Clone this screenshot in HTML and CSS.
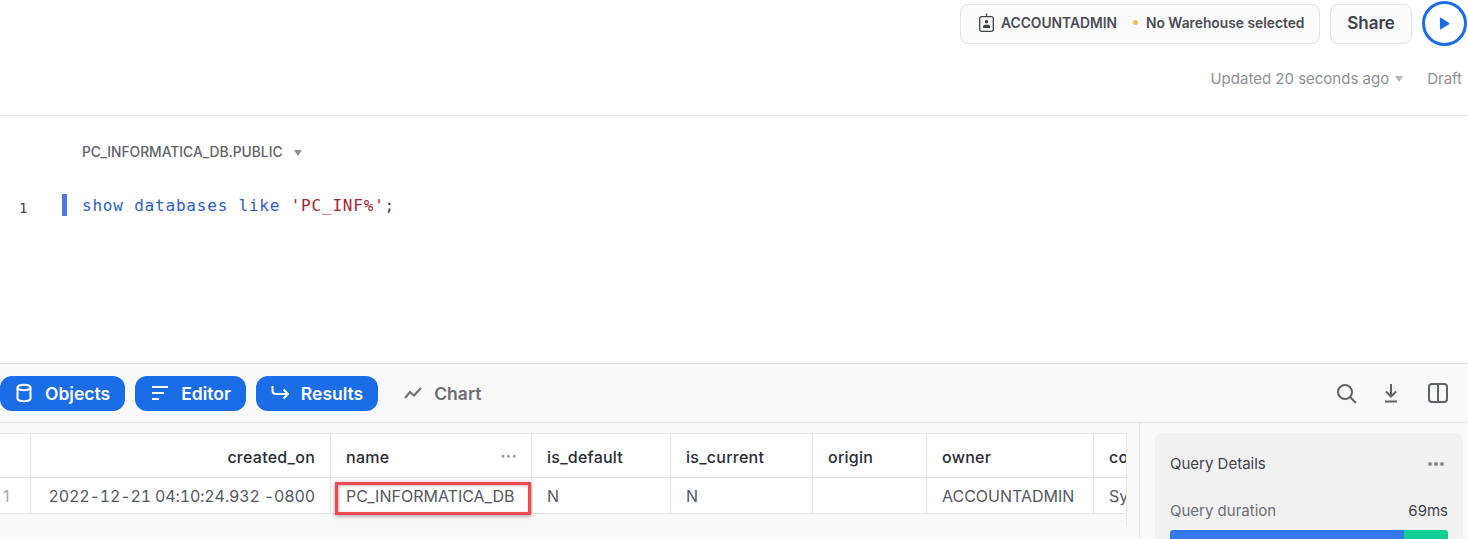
FILE: index.html
```html
<!DOCTYPE html>
<html lang="en">
<head>
<meta charset="utf-8">
<title>Worksheet</title>
<link rel="stylesheet" href="styles.css">
</head>
<body>
<div class="page">
  <header class="header">
    <div class="actions">
      <div class="context-pill">
        <svg class="role-icon" viewBox="0 0 15 19" width="15" height="19" fill="none" stroke="#3f4249" stroke-width="1.3"><rect x=".7" y="3.600" width="13.600" height="14.700" rx="2"/><path d="M7.500 .5v3.100"/><circle cx="7.500" cy="8.700" r="1.800" fill="#3f4249" stroke="none"/><path d="M4 15v-1.200c0-1.300 1-2 2-2h3c1 0 2 .7 2 2V15z" fill="#3f4249" stroke="none"/></svg>
        <span class="role">ACCOUNTADMIN</span>
        <span class="dot"></span>
        <span class="warehouse">No Warehouse selected</span>
      </div>
      <button class="share">Share</button>
      <button class="run"><svg viewBox="0 0 12 14" width="11" height="13"><path d="M1 1.200v11.600c0 .5.5.8 1 .5l9-5.600c.4-.3.4-.9 0-1.200L2 .7c-.5-.3-1 0-1 .5z" fill="#1a6ce7"/></svg></button>
    </div>
    <div class="status">
      <span>Updated 20 seconds ago</span><span class="caret"></span>
      <span class="draft">Draft</span>
    </div>
  </header>

  <section class="editor">
    <div class="db-context">PC_INFORMATICA_DB.PUBLIC<span class="caret"></span></div>
    <div class="code-line">
      <span class="line-no">1</span>
      <span class="line-mark"></span>
      <code class="code"><span class="kw">show databases like</span> <span class="str">'PC_INF%'</span><span class="punct">;</span></code>
    </div>
  </section>

  <section class="bottom">
    <div class="toolbar">
      <button class="tab">
        <svg viewBox="0 0 18 20" width="18" height="20" fill="none" stroke="#fff" stroke-width="2"><path d="M2.500 4.500c0-1.600 3-2.800 6.500-2.800s6.500 1.200 6.500 2.800v11c0 1.600-3 2.800-6.500 2.800s-6.500-1.200-6.500-2.800z"/><path d="M2.500 4.500c0 1.600 3 2.800 6.500 2.800s6.500-1.200 6.500-2.800"/></svg>
        Objects</button>
      <button class="tab tab-editor">
        <svg viewBox="0 0 18 18" width="18" height="18" fill="none" stroke="#fff" stroke-width="2"><path d="M1 3h16M1 9h12M1 15h7"/></svg>
        Editor</button>
      <button class="tab">
        <svg viewBox="0 0 18 16" width="18" height="16" fill="none" stroke="#fff" stroke-width="2"><path d="M1.500 1v4.500c0 2 1.500 3.500 3.500 3.500H17"/><path d="M12.500 4.500 17 9l-4.500 4.500"/></svg>
        Results</button>
      <div class="chart-tab">
        <svg viewBox="0 0 18 12" width="18" height="12" fill="none" stroke="#6b6e75" stroke-width="2"><path d="M1 11l5-6 4 3.500L17 1"/></svg>
        Chart</div>
      <div class="tools">
        <svg viewBox="0 0 21 21" width="21" height="21" fill="none" stroke="#5f6269" stroke-width="2"><circle cx="9" cy="9" r="7"/><path d="m14 14 6 6"/></svg>
        <svg class="download" viewBox="0 0 16 20" width="16" height="20" fill="none" stroke="#5f6269" stroke-width="2"><path d="M8 1v12M3 8.500 8 13.500 13 8.500M2 18.500h12"/></svg>
        <svg viewBox="0 0 20 20" width="20" height="20" fill="none" stroke="#5f6269" stroke-width="2"><rect x="1" y="1" width="18" height="18" rx="3"/><path d="M10 1v18"/></svg>
      </div>
    </div>

    <div class="content">
      <div class="results">
        <div class="grid-frame">
          <div class="grid">
            <div class="cell head"></div>
            <div class="cell head right">created_on</div>
            <div class="cell head name-head">name<span class="more">···</span></div>
            <div class="cell head">is_default</div>
            <div class="cell head">is_current</div>
            <div class="cell head">origin</div>
            <div class="cell head">owner</div>
            <div class="cell head clip">co</div>

            <div class="cell row-no">1</div>
            <div class="cell right stamp">2022-12-21 04:10:24.932 -0800</div>
            <div class="cell name-cell">PC_INFORMATICA_DB<span class="highlight"></span></div>
            <div class="cell">N</div>
            <div class="cell">N</div>
            <div class="cell"></div>
            <div class="cell">ACCOUNTADMIN</div>
            <div class="cell clip">Sy</div>
          </div>
        </div>
      </div>
      <aside class="side">
        <div class="card">
          <div class="card-head"><span>Query Details</span><span class="dots"><i></i><i></i><i></i></span></div>
          <div class="duration"><span class="label">Query duration</span><span>69ms</span></div>
          <div class="bar"><span class="bar-blue"></span><span class="bar-green"></span></div>
        </div>
      </aside>
    </div>
  </section>
</div>
</body>
</html>
```
FILE: styles.css
```css
* { box-sizing: border-box; }
html, body { margin: 0; padding: 0; }
body {
  background: #fff;
  color: #2f3238;
  font-family: Inter, "Liberation Sans", sans-serif;
}
button { font-family: inherit; cursor: pointer; }

.page {
  width: 1468px;
  height: 539px;
  overflow: hidden;
  display: flex;
  flex-direction: column;
}

/* Header */
.header {
  height: 116px;
  flex: none;
  border-bottom: 1px solid #e3e4e6;
  padding: 1px 0 0;
}
.actions {
  display: flex;
  align-items: center;
  justify-content: flex-end;
  height: 45px;
  padding-right: 1px;
}
.context-pill {
  width: 360px;
  height: 40px;
  display: flex;
  align-items: center;
  border: 1px solid #e3e4e6;
  border-radius: 8px;
  background: #fbfbfb;
  padding: 0 0 2px 18px;
  font-size: 13.800px;
  font-weight: 600;
  color: #4a4d54;
}
.role-icon { flex: none; }
.role { margin-left: 7px; }
.dot {
  width: 5px;
  height: 5px;
  border-radius: 50%;
  background: #f0c43f;
  margin: 0 8px 0 16px;
}
.share {
  width: 82px;
  height: 40px;
  margin-left: 10px;
  border: 1px solid #e3e4e6;
  border-radius: 8px;
  background: #fbfbfb;
  color: #3f4249;
  font-size: 17px;
  font-weight: 600;
  padding: 0 0 2px;
}
.run {
  width: 45px;
  height: 45px;
  margin-left: 10px;
  border: 3px solid #1a6ce7;
  border-radius: 50%;
  background: #fff;
  padding: 0;
  display: flex;
  align-items: center;
  justify-content: center;
}
.status {
  display: flex;
  align-items: center;
  justify-content: flex-end;
  margin-top: 23px;
  padding-right: 6px;
  font-size: 15px;
  color: #8d9096;
  line-height: 20px;
}
.caret {
  width: 0;
  height: 0;
  border-left: 4px solid transparent;
  border-right: 4px solid transparent;
  border-top: 6px solid #b4b6ba;
  margin-left: 6px;
  display: inline-block;
}
.draft { margin-left: 24px; }

/* Editor */
.editor {
  height: 247px;
  flex: none;
  padding-top: 27px;
}
.db-context {
  display: flex;
  align-items: center;
  padding-left: 82px;
  font-size: 13.800px;
  font-weight: 500;
  line-height: 18px;
  color: #5f6269;
}
.db-context .caret { border-top-color: #8d9096; margin-left: 11px; margin-top: 2px; }
.code-line {
  display: flex;
  align-items: center;
  height: 22px;
  margin-top: 33px;
}
.line-no {
  width: 62px;
  padding-left: 19px;
  font-family: "DejaVu Sans Mono", monospace;
  font-size: 14px;
  color: #3f4249;
  position: relative;
  top: 3px;
}
.line-mark {
  width: 5px;
  height: 22px;
  background: #4a78ec;
}
.code {
  margin-left: 15px;
  font-family: "DejaVu Sans Mono", monospace;
  font-size: 16px;
  letter-spacing: 0.8px;
  white-space: pre;
}
.kw { color: #2a5ec9; }
.str { color: #a8232f; }
.punct { color: #3f4249; }

/* Bottom panel */
.bottom {
  flex: 1;
  min-height: 0;
  background: #f9f9f9;
  border-top: 1px solid #e3e4e6;
  display: flex;
  flex-direction: column;
}
.toolbar {
  height: 59px;
  flex: none;
  display: flex;
  align-items: center;
  border-bottom: 1px solid #e3e4e6;
  padding-right: 20px;
}
.tab {
  height: 35px;
  display: flex;
  align-items: center;
  gap: 12px;
  background: #1a6ce7;
  color: #fff;
  border: 0;
  border-radius: 12px;
  padding: 0 15px;
  font-size: 17.500px;
  font-weight: 600;
  margin-right: 10px;
}
.tab-editor { padding-left: 16px; }
.chart-tab {
  display: flex;
  align-items: center;
  gap: 12px;
  margin-left: 16px;
  font-size: 17.500px;
  font-weight: 600;
  color: #6b6e75;
}
.tools {
  margin-left: auto;
  display: flex;
  align-items: center;
  gap: 26px;
}
.download { margin-right: 3px; }

.content {
  flex: 1;
  min-height: 0;
  display: flex;
}
.results {
  width: 1140px;
  flex: none;
  border-right: 1px solid #e3e4e6;
  padding-top: 10px;
}
.grid-frame {
  width: 1127px;
  height: 93px;
  border-right: 1px solid #e9e9ea;
}
.grid {
  display: grid;
  grid-template-columns: 31px 300px 201px 139px 142px 114px 167px 32px;
  grid-template-rows: 44px 36px;
  background: #fff;
  border-top: 1px solid #e3e4e6;
  font-size: 16px;
}
.cell {
  position: relative;
  display: flex;
  align-items: center;
  padding: 0 15px;
  border-right: 1px solid #e3e4e6;
  border-bottom: 1px solid #e3e4e6;
  white-space: nowrap;
  color: #55585f;
}
.head {
  padding-top: 3px;
  font-weight: 500;
  letter-spacing: .25px;
  color: #2a2d33;
}
.right { justify-content: flex-end; }
.stamp { font-variant-numeric: tabular-nums; letter-spacing: -.14px; }
.clip { border-right: 0; overflow: hidden; padding-right: 0; }
.row-no { color: #a6a8ac; padding: 0 0 0 3px; }
.more {
  margin-left: auto;
  margin-right: -1px;
  color: #8d9096;
  font-weight: 700;
  position: relative;
  top: -1px;
}
.highlight {
  position: absolute;
  left: 4px;
  top: 4px;
  width: 196px;
  height: 33px;
  border: 3px solid #ef4a4f;
  box-shadow: 0 1px 4px rgba(0, 0, 0, .4), inset 1px 1px 3px rgba(0, 0, 0, .25);
  pointer-events: none;
}

.side {
  flex: 1;
  padding: 10px 5px 0 15px;
}
.card {
  height: 120px;
  background: #f1f1f2;
  border-radius: 8px;
  padding: 21px 15px;
  font-size: 15px;
}
.card-head {
  display: flex;
  justify-content: space-between;
  align-items: center;
  line-height: 20px;
  color: #3f4249;
}
.dots { display: flex; gap: 2px; margin-right: 4px; }
.dots i { width: 4px; height: 4px; border-radius: 50%; background: #85878d; }
.duration {
  display: flex;
  justify-content: space-between;
  margin-top: 27px;
  line-height: 20px;
  color: #3f4249;
}
.label { color: #6b6e75; }
.bar {
  display: flex;
  height: 20px;
  margin-top: 9px;
  border-radius: 3px;
  overflow: hidden;
}
.bar-blue { width: 234px; background: #3478ea; }
.bar-green { flex: 1; background: #14cf94; }
```
